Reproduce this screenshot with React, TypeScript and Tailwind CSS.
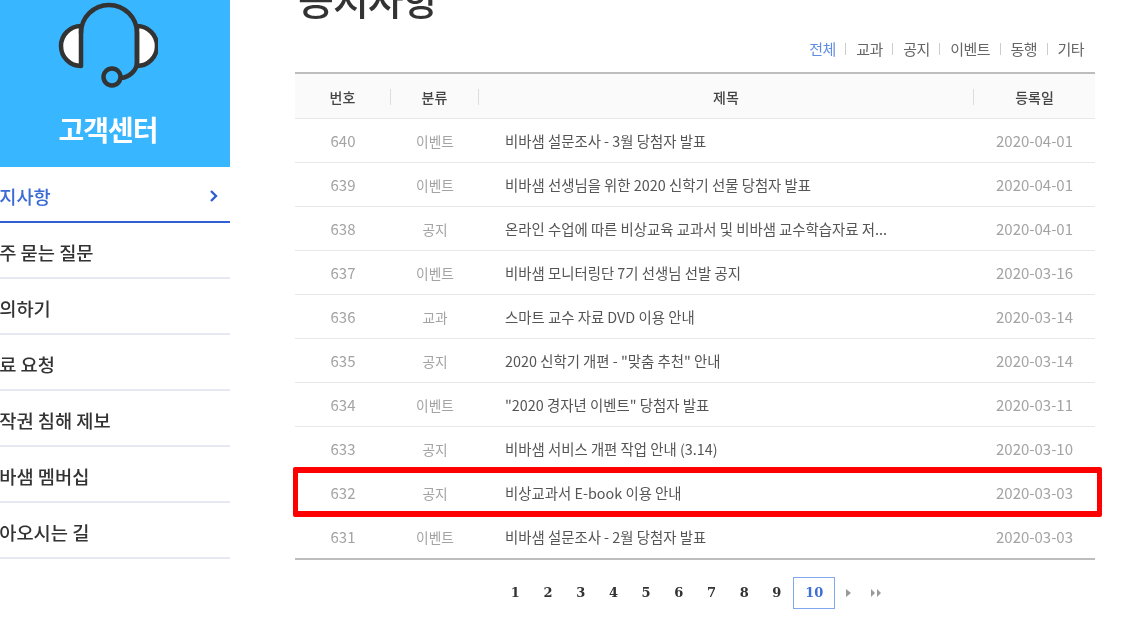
import React from "react";

const rows = [
  ["640", "이벤트", "비바샘 설문조사 - 3월 당첨자 발표", "2020-04-01"],
  ["639", "이벤트", "비바샘 선생님을 위한 2020 신학기 선물 당첨자 발표", "2020-04-01"],
  ["638", "공지", "온라인 수업에 따른 비상교육 교과서 및 비바샘 교수학습자료 저...", "2020-04-01"],
  ["637", "이벤트", "비바샘 모니터링단 7기 선생님 선발 공지", "2020-03-16"],
  ["636", "교과", "스마트 교수 자료 DVD 이용 안내", "2020-03-14"],
  ["635", "공지", "2020 신학기 개편 - \"맞춤 추천\" 안내", "2020-03-14"],
  ["634", "이벤트", "\"2020 경자년 이벤트\" 당첨자 발표", "2020-03-11"],
  ["633", "공지", "비바샘 서비스 개편 작업 안내 (3.14)", "2020-03-10"],
  ["632", "공지", "비상교과서 E-book 이용 안내", "2020-03-03"],
  ["631", "이벤트", "비바샘 설문조사 - 2월 당첨자 발표", "2020-03-03"],
];
const nav = ["자주 묻는 질문", "문의하기", "자료 요청", "저작권 침해 제보", "비바샘 멤버십", "찾아오시는 길"];
const filters = ["교과", "공지", "이벤트", "동행", "기타"];

function Headset() {
  return (
    <svg width="100" height="88" viewBox="0 0 100 88" fill="none" stroke="#333" strokeWidth="4.5" strokeLinecap="round" strokeLinejoin="round">
      <path d="M23 24A20 20 0 0 0 23 64Z" fill="#fff" />
      <path d="M79 24A20 20 0 0 1 79 64Z" fill="#fff" />
      <path d="M23 31A28 28 0 0 1 79 31V60C79 69 71 75 63 76" />
      <circle cx="54" cy="75" r="8.5" />
    </svg>
  );
}

export default function App() {
  return (
    <div className="relative h-[625px] w-[1147px] overflow-hidden bg-white [font-family:'Noto_Sans_CJK_KR','Noto_Sans',sans-serif] blur-[0.5px]">
      <div className="-mt-[20px] flex items-start">
        <aside className="-ml-[14px] w-[244px] shrink-0">
          <div className="flex h-[187px] flex-col items-center bg-[#38b6ff] pt-[22px]">
            <Headset />
            <div className="mt-[19px] text-[28px] leading-[40px] font-bold tracking-[-1px] text-white">고객센터</div>
          </div>
          <div className="flex h-[56px] items-center justify-between border-b-2 border-[#2f5fd0] pt-[4px] pr-[11px] text-[18.7px] font-medium text-[#3b6bd6]">
            <span className="-ml-[4px]">공지사항</span>
            <svg width="10" height="14" viewBox="0 0 10 14" fill="none" stroke="#2f5fd0" strokeWidth="2.4"><path d="M2 2l5 5-5 5" /></svg>
          </div>
          {nav.map((n) => (
            <div key={n} className="flex h-[56px] items-center border-b-2 border-[#e6e9f3] pt-[5px] text-[18.7px] font-medium text-[#333]">
              <span className="-ml-[4px]">{n}</span>
            </div>
          ))}
        </aside>
        <main className="ml-[65px] w-[800px] shrink-0">
          <h1 className="-mt-[12px] ml-[3px] h-[60px] text-[39px] leading-[60px] font-medium tracking-[-1px] text-[#333]">공지사항</h1>
          <div className="mt-[9px] flex h-[24px] items-center justify-end gap-[9.7px] pr-[11px] text-[15px] tracking-[-0.5px] text-[#666]">
            <span className="text-[#5f8de0]">전체</span>
            {filters.map((f) => (
              <React.Fragment key={f}>
                <span className="h-[12px] w-px bg-[#ccc]" />
                <span>{f}</span>
              </React.Fragment>
            ))}
          </div>
          <div className="mt-[11px] border-t-2 border-b-2 border-[#bdbdbd]">
            <div className="grid h-[45px] grid-cols-[96px_88px_495px_121px] items-center border-b border-[#e8e8e8] bg-[#fafafa] pt-[1px] text-center text-[14px] font-medium text-[#444]">
              <span className="border-r border-[#ddd] leading-[16px]">번호</span>
              <span className="border-r border-[#ddd] leading-[16px]">분류</span>
              <span className="border-r border-[#ddd] leading-[16px]">제목</span>
              <span className="leading-[16px]">등록일</span>
            </div>
            {rows.map((r, i) => (
              <div key={r[0]} className={`relative grid grid-cols-[96px_88px_495px_121px] items-center pt-[1px] text-center ${i < rows.length - 1 ? "h-[44px] border-b border-[#e8e8e8]" : "h-[43px]"}`}>
                <span className="text-[15px] text-[#a3a3a3]">{r[0]}</span>
                <span className="text-[13.7px] text-[#a3a3a3]">{r[1]}</span>
                <span className="pl-[26px] text-left text-[14.4px] text-[#555]">{r[2]}</span>
                <span className="text-[15px] text-[#a3a3a3]">{r[3]}</span>
                {r[0] === "632" && (
                  <div className="absolute top-[-4px] left-[-2px] h-[50px] w-[809px] rounded-[2px] border-x-[5px] border-y-[6px] border-[#ff0000]" />
                )}
              </div>
            ))}
          </div>
          <div className="mt-[17px] ml-[204px] flex h-[32px] items-center text-[13px] font-bold text-[#333] [font-family:'DejaVu_Serif',serif]">
            {["1", "2", "3", "4", "5", "6", "7", "8", "9"].map((p) => (
              <span key={p} className="w-[32.7px] text-center">{p}</span>
            ))}
            <span className="flex h-[32px] w-[42px] items-center justify-center border-[1.5px] border-[#7fa8ee] text-[#3f6fd6]">10</span>
            <svg className="ml-[10px]" width="8" height="10" viewBox="0 0 8 10" fill="#999"><path d="M1 1l5 4-5 4z" /></svg>
            <svg className="ml-[17px]" width="12" height="10" viewBox="0 0 12 10" fill="#999"><path d="M1 1l4 4-4 4zM7 1l4 4-4 4z" /></svg>
          </div>
        </main>
      </div>
    </div>
  );
}
